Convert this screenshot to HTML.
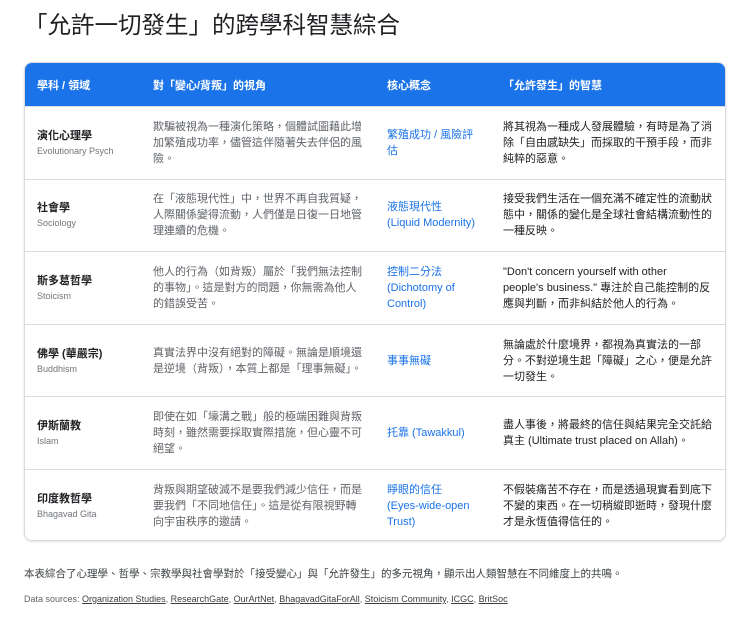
<!DOCTYPE html>
<html><head><meta charset="utf-8"><style>
*{margin:0;padding:0;box-sizing:border-box}
body{width:740px;height:618px;background:#fff;font-family:"Liberation Sans","Noto Sans CJK TC",sans-serif;color:#202124;position:relative;overflow:hidden}
h1{position:absolute;left:24px;top:6px;font-size:23.5px;font-weight:400;color:#202124;font-family:"Liberation Sans","Noto Sans CJK TC",sans-serif}
.tbl{position:absolute;left:24px;top:62px;width:702px;height:479px;border:1px solid #dadce0;border-radius:8px;overflow:hidden;box-shadow:0 1px 2px rgba(0,0,0,.12)}
.hd{height:43px;background:#1a73e8;color:#fff;font-weight:700;font-size:11px;position:relative}
.row{height:72.6px;border-top:1px solid #dadce0;position:relative;font-size:11px;line-height:16px}
.row:first-of-type{border-top:none}
.c{position:absolute;top:0;bottom:0;display:flex;flex-direction:column;justify-content:center}
.c1{left:12px;width:110px}.c2{left:128px;width:210px;color:#5f6368}.c3{left:362px;width:94px;color:#1a73e8}.c4{left:478px;width:214px;color:#202124}
.hd .c{color:#fff}
b{font-weight:700;font-size:11px;color:#202124}
small{font-size:9px;color:#70757a;line-height:14px}
.f1{position:absolute;left:24px;top:566px;font-size:10.5px;color:#3c4043}
.f2{position:absolute;left:24px;top:594px;font-size:9px;color:#5f6368}
.f2 u{color:#3c4043}
</style></head><body>
<h1>「允許一切發生」的跨學科智慧綜合</h1>
<div class="tbl">
<div class="hd"><div class="c c1">學科 / 領域</div><div class="c c2" style="color:#fff">對「變心/背叛」的視角</div><div class="c c3" style="color:#fff">核心概念</div><div class="c c4" style="color:#fff">「允許發生」的智慧</div></div>
<div class="row"><div class="c c1"><b>演化心理學</b><small>Evolutionary Psych</small></div><div class="c c2">欺騙被視為一種演化策略，個體試圖藉此增加繁殖成功率，儘管這伴隨著失去伴侶的風險。</div><div class="c c3">繁殖成功 / 風險評估</div><div class="c c4"><span>將其視為一種成人發展體驗，有時是為了消除「自由感缺失」而採取的干預手段，而非純粹的惡意。</span></div></div>
<div class="row"><div class="c c1"><b>社會學</b><small>Sociology</small></div><div class="c c2">在「液態現代性」中，世界不再自我質疑，人際關係變得流動，人們僅是日復一日地管理連續的危機。</div><div class="c c3"><span>液態現代性<br>(Liquid Modernity)</span></div><div class="c c4">接受我們生活在一個充滿不確定性的流動狀態中，關係的變化是全球社會結構流動性的一種反映。</div></div>
<div class="row"><div class="c c1"><b>斯多葛哲學</b><small>Stoicism</small></div><div class="c c2">他人的行為（如背叛）屬於「我們無法控制的事物」。這是對方的問題，你無需為他人的錯誤受苦。</div><div class="c c3">控制二分法 (Dichotomy of Control)</div><div class="c c4"><span>"Don't concern yourself with other<br>people's business." 專注於自己能控制的反應與判斷，而非糾結於他人的行為。</span></div></div>
<div class="row"><div class="c c1"><b>佛學 (華嚴宗)</b><small>Buddhism</small></div><div class="c c2">真實法界中沒有絕對的障礙。無論是順境還是逆境（背叛），本質上都是「理事無礙」。</div><div class="c c3">事事無礙</div><div class="c c4">無論處於什麼境界，都視為真實法的一部分。不對逆境生起「障礙」之心，便是允許一切發生。</div></div>
<div class="row"><div class="c c1"><b>伊斯蘭教</b><small>Islam</small></div><div class="c c2">即使在如「壕溝之戰」般的極端困難與背叛時刻，雖然需要採取實際措施，但心靈不可絕望。</div><div class="c c3">托靠 (Tawakkul)</div><div class="c c4">盡人事後，將最終的信任與結果完全交託給真主 (Ultimate trust placed on Allah)。</div></div>
<div class="row"><div class="c c1"><b>印度教哲學</b><small>Bhagavad Gita</small></div><div class="c c2">背叛與期望破滅不是要我們減少信任，而是要我們「不同地信任」。這是從有限視野轉向宇宙秩序的邀請。</div><div class="c c3"><span>睜眼的信任<br>(Eyes-wide-open<br>Trust)</span></div><div class="c c4">不假裝痛苦不存在，而是透過現實看到底下不變的東西。在一切稍縱即逝時，發現什麼才是永恆值得信任的。</div></div>
</div>
<div class="f1">本表綜合了心理學、哲學、宗教學與社會學對於「接受變心」與「允許發生」的多元視角，顯示出人類智慧在不同維度上的共鳴。</div>
<div class="f2">Data sources: <u>Organization Studies</u>, <u>ResearchGate</u>, <u>OurArtNet</u>, <u>BhagavadGitaForAll</u>, <u>Stoicism Community</u>, <u>ICGC</u>, <u>BritSoc</u></div>
</body></html>
